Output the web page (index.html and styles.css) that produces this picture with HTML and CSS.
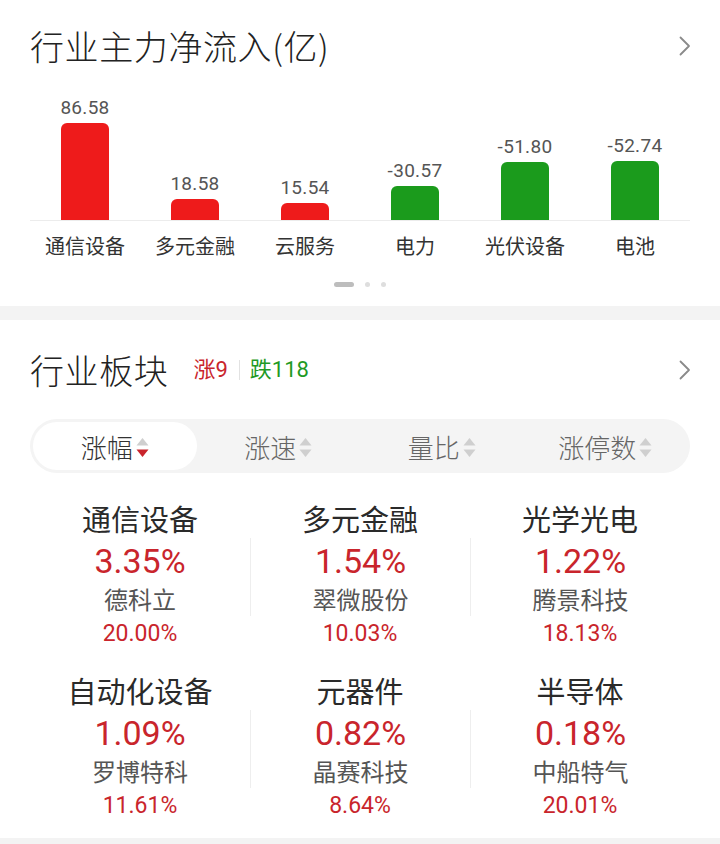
FILE: index.html
```html
<!DOCTYPE html>
<html lang="zh-CN">
<head>
<meta charset="utf-8">
<link rel="stylesheet" href="styles.css">
</head>
<body>
<section class="card flow">
  <div class="head">
    <h2 class="title">行业主力净流入(亿)</h2>
    <svg class="chev" viewBox="0 0 12 20" width="12" height="20"><polyline points="1.5,1.5 10,10 1.5,18.5" fill="none" stroke="#8a8a8a" stroke-width="1.8" stroke-linecap="round" stroke-linejoin="round"/></svg>
  </div>
  <div class="chart">
    <div class="col"><span class="val">86.58</span><span class="bar up" style="height:97px"></span></div>
    <div class="col"><span class="val">18.58</span><span class="bar up" style="height:21px"></span></div>
    <div class="col"><span class="val">15.54</span><span class="bar up" style="height:17px"></span></div>
    <div class="col"><span class="val">-30.57</span><span class="bar down" style="height:34px"></span></div>
    <div class="col"><span class="val">-51.80</span><span class="bar down" style="height:58px"></span></div>
    <div class="col"><span class="val">-52.74</span><span class="bar down" style="height:59px"></span></div>
  </div>
  <div class="cats">
    <span>通信设备</span><span>多元金融</span><span>云服务</span><span>电力</span><span>光伏设备</span><span>电池</span>
  </div>
  <div class="dots"><span class="pill"></span><span class="dot"></span><span class="dot"></span></div>
</section>

<section class="card sectors">
  <div class="head">
    <div class="head-left">
      <h2 class="title">行业板块</h2>
      <span class="cnt red">涨9</span><span class="sep"></span><span class="cnt green">跌118</span>
    </div>
    <svg class="chev" viewBox="0 0 12 20" width="12" height="20"><polyline points="1.5,1.5 10,10 1.5,18.5" fill="none" stroke="#8a8a8a" stroke-width="1.8" stroke-linecap="round" stroke-linejoin="round"/></svg>
  </div>
  <div class="tabs">
    <div class="tab active">涨幅<svg class="sort" viewBox="0 0 13 21" width="13" height="21"><polygon points="6.5,1 12.5,8.5 0.5,8.5" fill="#cfcfcf"/><polygon points="0.5,12.5 12.5,12.5 6.5,20" fill="#c9252c"/></svg></div>
    <div class="tab">涨速<svg class="sort" viewBox="0 0 13 21" width="13" height="21"><polygon points="6.5,1 12.5,8.5 0.5,8.5" fill="#cfcfcf"/><polygon points="0.5,12.5 12.5,12.5 6.5,20" fill="#cfcfcf"/></svg></div>
    <div class="tab">量比<svg class="sort" viewBox="0 0 13 21" width="13" height="21"><polygon points="6.5,1 12.5,8.5 0.5,8.5" fill="#cfcfcf"/><polygon points="0.5,12.5 12.5,12.5 6.5,20" fill="#cfcfcf"/></svg></div>
    <div class="tab">涨停数<svg class="sort" viewBox="0 0 13 21" width="13" height="21"><polygon points="6.5,1 12.5,8.5 0.5,8.5" fill="#cfcfcf"/><polygon points="0.5,12.5 12.5,12.5 6.5,20" fill="#cfcfcf"/></svg></div>
  </div>
  <div class="grid">
    <div class="cell"><div class="name">通信设备</div><div class="mid"><div class="pct">3.35%</div><div class="stock">德科立</div></div><div class="spct">20.00%</div></div>
    <div class="cell"><div class="name">多元金融</div><div class="mid line"><div class="pct">1.54%</div><div class="stock">翠微股份</div></div><div class="spct">10.03%</div></div>
    <div class="cell"><div class="name">光学光电</div><div class="mid line"><div class="pct">1.22%</div><div class="stock">腾景科技</div></div><div class="spct">18.13%</div></div>
    <div class="cell"><div class="name">自动化设备</div><div class="mid"><div class="pct">1.09%</div><div class="stock">罗博特科</div></div><div class="spct">11.61%</div></div>
    <div class="cell"><div class="name">元器件</div><div class="mid line"><div class="pct">0.82%</div><div class="stock">晶赛科技</div></div><div class="spct">8.64%</div></div>
    <div class="cell"><div class="name">半导体</div><div class="mid line"><div class="pct">0.18%</div><div class="stock">中船特气</div></div><div class="spct">20.01%</div></div>
  </div>
</section>
</body>
</html>
```

FILE: styles.css
```css
* { box-sizing: border-box; margin: 0; padding: 0; }
html, body { background: #f3f3f3; }
body {
  width: 720px;
  font-family: Roboto, "Noto Sans CJK SC", sans-serif;
  color: #222;
}
.card { background: #fff; padding: 0 30px; }
.flow { height: 306px; padding-top: 26px; }
.sectors { margin-top: 14px; padding-top: 30px; padding-bottom: 14px; }

.head { display: flex; align-items: center; justify-content: space-between; height: 40px; }
.head-left { display: flex; align-items: center; }
.title {
  font-family: "Noto Sans CJK SC", sans-serif;
  font-weight: 300; font-size: 34px; line-height: 40px; color: #222;
  letter-spacing: 0.6px;
}
.chev { margin-right: -1px; }

.chart {
  margin-top: 20px;
  height: 135px;
  display: flex; align-items: flex-end;
  border-bottom: 1px solid #ececec;
}
.col { flex: 1; display: flex; flex-direction: column; align-items: center; }
.val { font-size: 19px; line-height: 20px; color: #555; margin-bottom: 5px; letter-spacing: 0.3px; }
.bar { display: block; width: 48px; border-radius: 6px 6px 0 0; }
.bar.up { background: #ee1b1b; }
.bar.down { background: #1b9b1c; }

.cats { display: flex; margin-top: 12px; }
.cats span {
  flex: 1; text-align: center;
  font-family: "Noto Sans CJK SC", sans-serif;
  font-size: 20px; line-height: 26px; color: #333;
}
.dots { display: flex; justify-content: center; align-items: center; gap: 11px; margin-top: 23px; }
.pill { width: 20px; height: 5px; border-radius: 3px; background: #bdbdbd; }
.dot { width: 5px; height: 5px; border-radius: 50%; background: #dedede; }

.cnt { font-size: 22px; line-height: 28px; font-family: Roboto, "Noto Sans CJK SC", sans-serif; }
.cnt.red { color: #c9252c; margin-left: 25px; }
.cnt.green { color: #1f9a25; }
.sep { width: 1px; height: 20px; background: #e2e2e2; margin: 0 10px 0 11px; }

.tabs {
  margin-top: 29px;
  height: 54px; padding: 3px;
  background: #f4f4f4; border-radius: 27px;
  display: grid; grid-template-columns: repeat(4, 1fr);
}
.tab {
  display: flex; align-items: center; justify-content: center; gap: 3px;
  border-radius: 24px;
  font-family: "Noto Sans CJK SC", sans-serif;
  font-size: 26px; color: #666; font-weight: 300;
}
.tab.active { background: #fff; color: #333; }
.sort { margin-top: 2px; }

.grid { display: grid; grid-template-columns: repeat(3, 1fr); row-gap: 18px; margin-top: 25px; }
.cell { display: flex; flex-direction: column; align-items: stretch; text-align: center; }
.name { font-family: "Noto Sans CJK SC", sans-serif; font-size: 29px; line-height: 40px; color: #2a2a2a; }
.mid { padding: 2px 0 0; }
.mid.line { border-left: 1px solid #eeeeee; }
.pct { font-size: 34px; line-height: 42px; color: #c9252c; font-weight: 400; }
.stock { font-family: "Noto Sans CJK SC", sans-serif; font-size: 24px; line-height: 34px; color: #555; }
.spct { font-size: 23px; line-height: 36px; color: #c9252c; font-weight: 400; }
```
